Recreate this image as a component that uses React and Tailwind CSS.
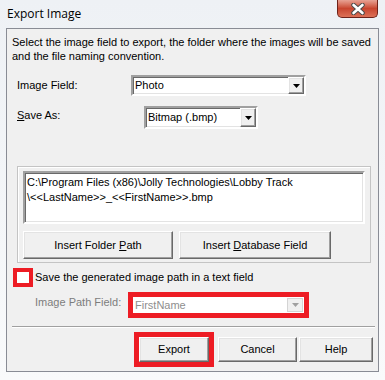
import React from "react";

const sunken =
  "border-2 border-t-[#a0a0a0] border-l-[#a0a0a0] border-r-white border-b-white shadow-[inset_1px_1px_#696969,inset_-1px_-1px_#e3e3e3]";
const raised =
  "border border-t-white border-l-white border-r-[#696969] border-b-[#696969] shadow-[inset_-1px_-1px_#a0a0a0,inset_1px_1px_#e3e3e3] bg-[#f0f0f0]";

const ArrowButton = ({ disabled }) => (
  <div
    className={`flex items-center justify-center w-[16px] h-full ${
      disabled
        ? "border border-[#d4d4d4] bg-[#f0f0f0]"
        : raised
    }`}
  >
    <svg width="7" height="4" viewBox="0 0 7 4">
      <path d="M0 0h7L3.5 4z" fill={disabled ? "#a0a0a0" : "#000"} />
    </svg>
  </div>
);

const Combo = ({ value, className }) => (
  <div className={`flex bg-white ${sunken} ${className}`}>
    <div className="flex-1 flex items-center pl-[2px]">{value}</div>
    <ArrowButton />
  </div>
);

const Button = ({ children, className }) => (
  <div
    className={`flex items-center justify-center ${raised} ${className}`}
  >
    {children}
  </div>
);

const App = () => {
  return (
    <div
      className="w-[385px] h-[380px] bg-gradient-to-b from-[#eef1f5] to-[#f9fafb] text-[11px] text-black overflow-hidden"
      style={{ fontFamily: '"Liberation Sans", Arial, sans-serif' }}
    >
      {/* title bar */}
      <div className="flex justify-between h-[28px]">
        <div
          className="pl-[7px] pt-[6px] text-[12px] leading-[16px]"
          style={{ fontFamily: '"Open Sans", "Noto Sans", sans-serif' }}
        >
          Export Image
        </div>
        <div className="mr-[7px] w-[41px] h-[18px] rounded-b-[5px] border border-t-0 border-[#6e2219] bg-gradient-to-b from-[#e7a294] via-[#c8452f] to-[#dc7057] flex items-center justify-center">
          <svg width="16" height="12" viewBox="0 0 16 12">
            <path
              d="M3.5 2L12.5 10M12.5 2L3.5 10"
              stroke="#4a4a4a"
              strokeWidth="4.5"
              strokeLinecap="round"
            />
            <path
              d="M3.5 2L12.5 10M12.5 2L3.5 10"
              stroke="#fff"
              strokeWidth="2.6"
              strokeLinecap="round"
            />
          </svg>
        </div>
      </div>

      {/* panel */}
      <div className="mx-[6px] h-[344px] border border-[#898c95] bg-[#f0f0f0] flex flex-col">
        <div className="pt-[6px] pl-[5px] leading-[14px]">
          Select the image field to export, the folder where the images will be saved
          <br />
          and the file naming convention.
        </div>

        <div className="flex items-center mt-[12px] pl-[10px]">
          <div className="w-[114px]">Image Field:</div>
          <Combo value="Photo" className="w-[175px] h-[21px]" />
        </div>

        <div className="flex items-center mt-[10px] pl-[10px]">
          <div className="w-[127px] -mt-[4px]">
            <span className="underline">S</span>ave As:
          </div>
          <Combo value="Bitmap (.bmp)" className="w-[114px] h-[23px]" />
        </div>

        {/* group */}
        <div className="ml-[10px] mt-[37px] w-[354px] h-[97px] border border-[#c4c4c4] shadow-[inset_1px_1px_#fff] pl-[5px] pt-[4px]">
          <div className={`w-[342px] h-[53px] bg-white ${sunken} px-[2px] pt-[2px] leading-[15px]`}>
            C:\Program Files (x86)\Jolly Technologies\Lobby Track
            <br />
            \&lt;&lt;LastName&gt;&gt;_&lt;&lt;FirstName&gt;&gt;.bmp
          </div>
          <div className="flex gap-[6px] mt-[7px]">
            <Button className="w-[150px] h-[28px]">
              Insert Folder&nbsp;<span className="underline">P</span>ath
            </Button>
            <Button className="w-[152px] h-[28px]">
              Insert&nbsp;<span className="underline">D</span>atabase Field
            </Button>
          </div>
        </div>

        {/* checkbox */}
        <div className="flex items-center mt-[5px] ml-[6px]">
          <div className="w-[20px] h-[19px] border-4 border-[#ed1c24] bg-white" />
          <div className="ml-[2px]">
            Save the generated image path in a text field
          </div>
        </div>

        <div className="flex items-center mt-[5px] ml-[28px]">
          <div className="w-[93px] whitespace-nowrap text-[#7d7d7d] -mt-[6px]">
            Image Path Field:
          </div>
          <div className="w-[181px] h-[26px] border-[5px] border-[#ed1c24] bg-white flex">
            <div className="flex-1 flex items-center pl-[2px] text-[#8e8e8e]">
              FirstName
            </div>
            <div className="py-[1px] pr-[1px]">
              <ArrowButton disabled />
            </div>
          </div>
        </div>

        {/* separator */}
        <div className="ml-[5px] mt-[8px] w-[363px] h-[2px] border-t border-[#a0a0a0] border-b border-b-white" />

        <div className="flex items-start justify-end mt-[4px] pr-[5px]">
          <div className="w-[80px] h-[35px] border-[5px] border-[#ed1c24]">
            <Button className="w-full h-full">Export</Button>
          </div>
          <Button className="w-[79px] h-[25px] ml-[4px] mt-[5px]">Cancel</Button>
          <Button className="w-[74px] h-[25px] ml-[2px] mt-[5px]">Help</Button>
        </div>
      </div>
    </div>
  );
};

export default App;
